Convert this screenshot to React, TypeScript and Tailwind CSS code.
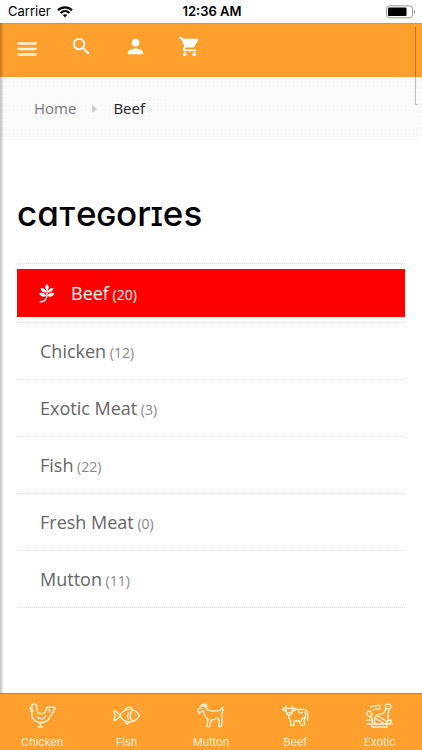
import React from 'react';
import { MdSearch, MdPerson, MdShoppingCart } from 'react-icons/md';

const categories = [
  { name: 'Chicken', count: 12 },
  { name: 'Exotic Meat', count: 3 },
  { name: 'Fish', count: 22 },
  { name: 'Fresh Meat', count: 0 },
  { name: 'Mutton', count: 11 },
];

const TabIcon = ({ children }: { children: React.ReactNode }) => (
  <svg
    className="h-[25px] w-[27px]"
    viewBox="0 0 81 75"
    fill="none"
    stroke="currentColor"
    strokeWidth="4.2"
    strokeLinecap="round"
    strokeLinejoin="round"
    aria-hidden="true"
  >
    {children}
  </svg>
);

const ChickenIcon = () => (
  <TabIcon>
    <path d="M9 10C7 5 10 3 13 5C14 1 19 1 19 5C23 4 25 8 22 11C25 17 23 26 28 30C36 34 44 32 49 27C53 22 49 15 57 12C61 11 66 14 68 12C74 11 79 14 79 18C75 18 73 20 73 23C75 25 74 28 71 29C70 33 66 35 64 39C61 51 50 58 37 58H30C18 56 8 47 8 35C8 29 11 25 11 20" />
    <path d="M9 10L2 16L10 17M6 20C4 25 8 28 12 24" />
    <path d="M25 41C31 50 43 50 50 40M58 20C64 20 64 24 61 27" />
    <path d="M29 59L34 63L39 59M34 63V72M27 72H40" />
  </TabIcon>
);

const FishIcon = () => (
  <TabIcon>
    <path d="M20 38C28 24 39 19 50 19C64 19 73 27 79 38C73 49 64 57 50 57C39 57 28 52 20 38Z" />
    <path d="M21 36C14 31 10 24 3 24C2 31 6 34 8 38C5 42 2 46 3 53C10 53 15 46 21 40" />
    <path d="M34 23C37 13 47 11 56 14L58 20M35 54L43 64L48 57M57 22C51 32 51 45 57 54M46 29C43 35 43 42 46 48" />
    <path d="M68 34V35" />
  </TabIcon>
);

const GoatIcon = () => (
  <TabIcon>
    <path d="M28 4C19 1 11 4 10 12L2 22C2 28 8 29 15 25L19 23C21 35 24 43 33 49L30 71H38L42 51C49 51 56 49 62 45L67 56L65 71H73L75 52L74 33C76 29 79 21 77 13C74 15 72 18 69 22C56 25 42 24 32 21C28 19 27 13 23 10" />
    <path d="M32 11C26 7 19 7 16 11M13 17V18M6 28L8 33" />
  </TabIcon>
);

const CowIcon = () => (
  <TabIcon>
    <path d="M12 16V8M31 16V8" />
    <path d="M12 16H31V22L28 35H15L12 22ZM12 16H2V21L12 24M31 16H41V21L31 24" />
    <path d="M41 19H66C74 19 77 25 77 35V52M20 37C20 47 22 50 26 52V67H36V54H52L57 67H67V51C71 45 72 36 69 27" />
    <path d="M50 20C48 30 57 33 61 28M58 54C58 47 62 44 67 43" />
    <path d="M17 29H26" />
  </TabIcon>
);

const ExoticIcon = () => (
  <TabIcon>
    <path d="M14 12C20 6 25 12 32 8C35 6 40 6 42 9M22 21C28 16 34 21 42 16" />
    <path d="M58 8C60 1 71 2 75 8C77 14 72 18 68 17L66 43C68 52 64 60 56 63H31C21 56 25 41 35 36C43 32 51 33 54 29L60 17Z" />
    <path d="M60 17H68M38 40L60 54M30 47L52 60" />
    <path d="M14 26C7 21 1 27 4 35C8 43 15 42 18 37C19 32 17 29 14 26ZM13 40L20 52M3 52C9 49 17 51 21 60M66 52L76 51L72 62" />
    <path d="M4 63H78M18 66V72H64V66" />
  </TabIcon>
);

const tabs = [
  { label: 'Chicken', Icon: ChickenIcon },
  { label: 'Fish', Icon: FishIcon },
  { label: 'Mutton', Icon: GoatIcon },
  { label: 'Beef', Icon: CowIcon },
  { label: 'Exotic', Icon: ExoticIcon },
];

const StatusBar = () => (
  <div className="grid h-[23px] grid-cols-3 items-center bg-white pl-2 pr-1.5 font-['Inter',sans-serif] text-[13px] text-black">
    <div className="flex items-center gap-1.5">
      <span>Carrier</span>
      <svg className="h-3 w-4" viewBox="0 0 16 12" fill="none" stroke="#000" strokeWidth="2.1" aria-hidden="true">
        <path d="M1 4.3C5 .4 11 .4 15 4.3M3.6 7C6.2 4.5 9.8 4.5 12.4 7" />
        <path d="M5.8 9.1C7.1 7.9 8.9 7.9 10.2 9.1L8 11.4Z" fill="#000" stroke="none" />
      </svg>
    </div>
    <span className="text-center font-semibold">12:36 AM</span>
    <svg className="h-[14px] w-[30px] justify-self-end" viewBox="0 0 30 14" aria-hidden="true">
      <rect x="0.5" y="0.8" width="26" height="12" rx="3" fill="#fff" stroke="#999" />
      <rect x="2" y="2.5" width="18.5" height="8.6" rx="1" fill="#000" />
      <path d="M28 4.8C29.5 5.5 29.5 8.3 28 9Z" fill="#888" />
    </svg>
  </div>
);

const Header = () => (
  <header className="flex h-[54px] border-t border-[#d9983f] bg-[#ff9f2e] text-white">
    <button aria-label="Menu" className="flex w-[54px] justify-center pt-[17px]">
      <svg className="h-4 w-5" viewBox="0 0 20 16" stroke="#fff5dc" strokeWidth="2.4" strokeLinecap="round" aria-hidden="true">
        <path d="M1.5 2.5H18.5M1.5 8H18.5M1.5 13.5H18.5" />
      </svg>
    </button>
    <button aria-label="Search" className="flex w-[54px] justify-center pt-[11px]">
      <MdSearch size={23} />
    </button>
    <button aria-label="Account" className="flex w-[54px] justify-center pt-[11px]">
      <MdPerson size={23} />
    </button>
    <button aria-label="Cart" className="flex w-[54px] justify-center pt-[11px]">
      <MdShoppingCart size={23} />
    </button>
  </header>
);

const App = () => {
  return (
    <div className="flex min-h-screen flex-col bg-white font-['Open_Sans',sans-serif]">
      <StatusBar />

      <div className="relative flex flex-1 flex-col">
        <Header />

        <nav
          aria-label="Breadcrumb"
          className="flex h-[63px] items-center bg-[repeating-linear-gradient(180deg,#fefefe_0_2px,transparent_2px_6px),repeating-linear-gradient(90deg,#f8f8f8_0_3px,#fefefe_3px_4px)] pl-[34px] text-[15px]"
        >
          <a href="#home" className="text-[#777]">Home</a>
          <svg className="mx-4 h-2 w-[5px]" viewBox="0 0 5 8" fill="#ccc" aria-hidden="true">
            <path d="M0 0L5 4L0 8Z" />
          </svg>
          <span className="text-[#222]">Beef</span>
        </nav>

        <main className="flex-1 px-[17px] pt-12">
          <h1 className="h-[50px] font-['Inter',sans-serif] text-[35px] font-medium leading-[50px] text-black [font-feature-settings:'cv08','cv11']">
            ca<span className="text-[26px] font-semibold uppercase">t</span>e
            <span className="text-[26px] font-semibold uppercase">g</span>or
            <span className="text-[26px] font-semibold uppercase">i</span>es
          </h1>

          <ul className="mt-[25px] border-t border-dotted border-[#ddd] text-lg">
            <li className="border-b border-dotted border-[#ddd] py-[5px]">
              <a href="#beef" className="flex h-12 items-center bg-[#fe0000] pl-[22px] text-white">
                <svg className="mr-4 h-[19px] w-4" viewBox="0 0 16 19" fill="#fff" aria-hidden="true">
                  <path d="M8 0C10.5 2.5 10.2 4.5 8 6.2C5.8 4.5 5.5 2.5 8 0Z" />
                  <path d="M1.5 4C5 3.8 7 5.5 7.4 8.5C4 8.7 2 7.2 1.5 4ZM14.5 4C11.5 4 9 5.4 8.6 8.5C12 8.6 14 7 14.5 4Z" />
                  <path d="M0 9.5C3 7.8 6 9 7.3 12C4 13.5 1.5 12.5 0 9.5ZM15.5 9.5C12.6 7.8 9.6 9 8.3 12C11.5 13.5 14 12.5 15.5 9.5Z" />
                  <path d="M8 4V11C8 15.5 5 17.8 .8 18" fill="none" stroke="#fff" strokeWidth="1.3" />
                </svg>
                <span>
                  Beef<span className="text-sm"> (20)</span>
                </span>
              </a>
            </li>
            {categories.map((item) => (
              <li key={item.name} className="border-b border-dotted border-[#ddd]">
                <a href="#category" className="block h-14 pl-[23px] leading-[56px] text-[#666]">
                  {item.name}
                  <span className="text-sm text-[#888]"> ({item.count})</span>
                </a>
              </li>
            ))}
          </ul>
        </main>

        {/* Drawer shadow and edge of the side panel */}
        <div className="pointer-events-none absolute inset-y-0 left-0 w-1 bg-gradient-to-r from-black/25 to-transparent"></div>
        <div className="pointer-events-none absolute right-1 top-1 h-[78px] w-[3px] border-b border-l border-black/25"></div>
      </div>

      <nav aria-label="Shop" className="grid h-[57px] grid-cols-5 border-t border-[#c9803a] bg-[#ff9f2e] font-['Inter',sans-serif] text-[11px] text-[#fff0d0]">
        {tabs.map(({ label, Icon }) => (
          <a key={label} href="#tab" className="flex flex-col items-center pt-[9px]">
            <Icon />
            <span className="mt-1.5 leading-4">{label}</span>
          </a>
        ))}
      </nav>
    </div>
  );
};

export default App;
